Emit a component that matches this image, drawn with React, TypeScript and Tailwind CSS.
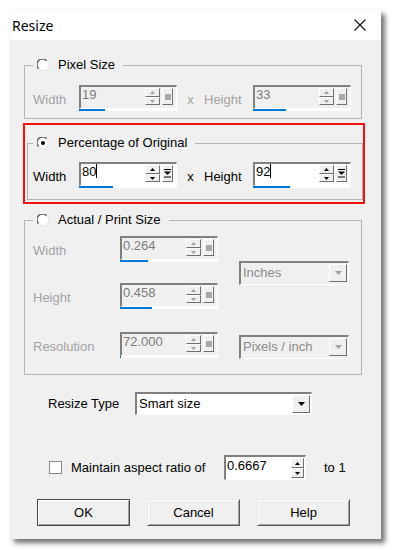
import React from 'react'

const raised = 'border border-t-white border-l-white border-b-[#6f6f6f] border-r-[#6f6f6f] bg-[#f0f0f0]'
const sunken = 'border-t-2 border-l-2 border-b border-r border-t-[#808080] border-l-[#808080] border-b-white border-r-white'
const off = 'text-[#a3a3a3]'

function Tri({ up = false, c, w = 5, h = 3 }: { up?: boolean; c: string; w?: number; h?: number }) {
  return (
    <svg width={w} height={h} viewBox={`0 0 ${w} ${h}`}>
      <path d={up ? `M0 ${h}H${w}L${w / 2} 0Z` : `M0 0H${w}L${w / 2} ${h}Z`} fill={c} />
    </svg>
  )
}

function Radio({ on = false }: { on?: boolean }) {
  return (
    <svg width="12" height="12" viewBox="0 0 12 12">
      <circle cx="6" cy="6" r="5.5" fill="#fff" />
      <path d="M1.6 9.6A5.2 5.2 0 0 1 9.6 1.6" stroke="#6a6a6a" strokeWidth="1.5" fill="none" />
      <path d="M10.4 2.4A5.2 5.2 0 0 1 2.4 10.4" stroke="#e2e2e2" strokeWidth="1" fill="none" />
      {on && <circle cx="6" cy="6" r="2" fill="#000" />}
    </svg>
  )
}

function SliderIcon() {
  return (
    <svg width="7" height="9" viewBox="0 0 7 9">
      <rect x="0" y="0" width="7" height="1" fill="#000" />
      <path d="M0 2.5H7L3.5 6Z" fill="#000" />
      <rect x="0" y="7.5" width="7" height="1" fill="#000" />
    </svg>
  )
}

function SpinBox({ value, bar, on = false }: { value: string; bar: number; on?: boolean }) {
  const arrow = on ? '#000' : '#a0a0a0'
  return (
    <div className="flex w-[98px] flex-col">
      <div className={`flex h-[24px] ${sunken} ${on ? 'bg-white' : 'bg-[#f0f0f0]'}`}>
        <span className={`flex-1 pl-[1px] text-[13px] leading-[15px] ${on ? 'text-black' : 'text-[#7c7c7c]'}`}>
          {value}
          {on && <span className="inline-block h-[14px] w-px bg-black align-top" />}
        </span>
        <div className="mt-[1px] flex h-[17px] w-[15px] flex-col">
          <div className={`flex h-[9px] items-center justify-center ${raised}`}><Tri up c={arrow} /></div>
          <div className={`flex h-[8px] items-center justify-center ${raised}`}><Tri c={arrow} /></div>
        </div>
        <div className={`ml-[2px] mr-[3px] mt-[1px] flex h-[17px] w-[11px] items-center justify-center ${raised}`}>
          {on ? <SliderIcon /> : <div className="h-[6px] w-[6px] bg-[#a8a8a8]" />}
        </div>
      </div>
      <div className="flex h-[2px] bg-white">
        <div className="bg-[#0078d7]" style={{ width: bar }} />
      </div>
    </div>
  )
}

function Combo({ label, on = false, cls }: { label: string; on?: boolean; cls: string }) {
  return (
    <div className={`flex ${cls} ${sunken} ${on ? 'bg-white' : 'bg-[#f0f0f0]'}`}>
      <span className={`flex-1 pl-[2px] text-[13px] leading-[20px] ${on ? 'text-black' : 'text-[#8a8a8a]'}`}>{label}</span>
      <div className={`m-[1px] flex h-[18px] w-[18px] items-center justify-center ${raised}`}>
        <Tri c={on ? '#000' : '#a0a0a0'} w={7} h={4} />
      </div>
    </div>
  )
}

function Legend({ label, on = false }: { label: string; on?: boolean }) {
  return (
    <legend className="pl-[4px] pr-[8px]">
      <span className="flex items-center gap-[9px] leading-[16px] text-black">
        <Radio on={on} />
        {label}
      </span>
    </legend>
  )
}

function SizeRow({ dim, w, h, wb, hb, on = false }: { dim: string; w: string; h: string; wb: number; hb: number; on?: boolean }) {
  const t = on ? 'text-black' : off
  return (
    <div className={`flex items-start ${dim}`}>
      <span className={`mt-[7px] w-[46px] leading-[16px] ${t}`}>Width</span>
      <SpinBox value={w} bar={wb} on={on} />
      <span className={`mt-[7px] w-[27px] text-center leading-[16px] ${t}`}>x</span>
      <span className={`mt-[7px] w-[49px] leading-[16px] ${t}`}>Height</span>
      <SpinBox value={h} bar={hb} on={on} />
    </div>
  )
}

function PrintRow({ label, value, bar, cls }: { label: string; value: string; bar: number; cls: string }) {
  return (
    <div className={`flex items-start ${cls}`}>
      <span className={`mt-[7px] w-[87px] leading-[16px] ${off}`}>{label}</span>
      <SpinBox value={value} bar={bar} />
    </div>
  )
}

function Btn({ label, def = false }: { label: string; def?: boolean }) {
  return (
    <button
      className={`h-[27px] w-[93px] bg-[#f0f0f0] text-[13px] text-black ${
        def
          ? 'border border-[#4a4a4a] shadow-[inset_1px_1px_0_#fff,inset_-1px_-1px_0_#a0a0a0]'
          : 'border border-t-[#e8e8e8] border-l-[#e8e8e8] border-b-[#5a5a5a] border-r-[#5a5a5a] shadow-[inset_1px_1px_0_#fff,inset_-1px_-1px_0_#a0a0a0]'
      }`}
    >
      {label}
    </button>
  )
}

export default function App() {
  return (
    <div className="h-[550px] w-[393px] bg-white pl-[10px] pt-[10px] font-['Liberation_Sans',Arial,sans-serif] text-[13px]">
      <div className="flex h-[529px] w-[371px] flex-col shadow-[4px_4px_5px_rgba(0,0,0,0.55)]">
        {/* title bar */}
        <div className="flex h-[30px] items-center justify-between bg-white pl-[2px] pr-[15px]">
          <span className="font-['Noto_Sans',sans-serif] text-[14px] text-black">Resize</span>
          <svg width="12" height="12" viewBox="0 0 12 12">
            <path d="M0.5 0.5L11.5 11.5M11.5 0.5L0.5 11.5" stroke="#111" strokeWidth="1.1" />
          </svg>
        </div>

        <div className="flex flex-1 flex-col bg-[#f0f0f0] pl-[14px] pt-[17px]">
          <fieldset className="w-[338px] border border-[#b4b4b4] pb-[7px] pl-[8px]">
            <Legend label="Pixel Size" />
            <SizeRow dim="mt-[12px]" w="19" h="33" wb={26} hb={33} />
          </fieldset>

          <div className="ml-[-1px] mt-[4px] w-[342px] border-2 border-[#ee1111] pb-[2px] pl-[2px] pt-[10px]">
            <fieldset className="w-[336px] border border-[#b4b4b4] pb-[11px] pl-[5px]">
              <Legend label="Percentage of Original" on />
              <SizeRow dim="mt-[11px]" w="80" h="92" wb={34} hb={37} on />
            </fieldset>
          </div>

          <fieldset className="mt-[8px] w-[338px] border border-[#b4b4b4] pb-[15px] pl-[8px]">
            <Legend label="Actual / Print Size" />
            <div className="flex">
              <div className="flex flex-col">
                <PrintRow label="Width" value="0.264" bar={28} cls="mt-[8px]" />
                <PrintRow label="Height" value="0.458" bar={32} cls="mt-[21px]" />
                <PrintRow label="Resolution" value="72.000" bar={1} cls="mt-[23px]" />
              </div>
              <div className="ml-[21px] flex flex-col">
                <Combo label="Inches" cls="mt-[33px] h-[24px] w-[110px]" />
                <Combo label="Pixels / inch" cls="mt-[50px] h-[24px] w-[110px]" />
              </div>
            </div>
          </fieldset>

          <div className="ml-[24px] mt-[17px] flex items-center">
            <span className="w-[87px] text-black">Resize Type</span>
            <Combo label="Smart size" on cls="h-[23px] w-[177px]" />
          </div>

          <div className="ml-[25px] mt-[40px] flex h-[25px] items-center">
            <div className="h-[13px] w-[13px] border border-[#8a8a8a] bg-white" />
            <span className="ml-[9px] w-[153px] text-black">Maintain aspect ratio of</span>
            <div className={`flex h-[25px] w-[82px] ${sunken} bg-white`}>
              <span className="flex-1 pl-[1px] leading-[17px] text-black">0.6667</span>
              <div className="mr-[1px] mt-[1px] flex h-[20px] w-[13px] flex-col">
                <div className={`flex h-[10px] items-center justify-center ${raised}`}><Tri up c="#000" /></div>
                <div className={`flex h-[10px] items-center justify-center ${raised}`}><Tri c="#000" /></div>
              </div>
            </div>
            <span className="ml-[18px] text-black">to 1</span>
          </div>

          <div className="ml-[13px] mt-[19px] flex gap-[17px]">
            <Btn label="OK" def />
            <Btn label="Cancel" />
            <Btn label="Help" />
          </div>
        </div>
      </div>
    </div>
  )
}
